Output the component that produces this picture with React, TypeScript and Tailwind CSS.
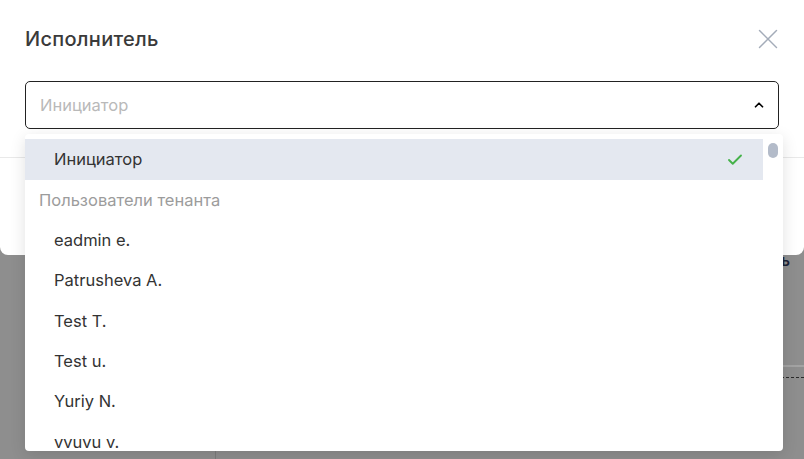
import { ChevronUp, X, Check } from 'lucide-react';

const users = ['eadmin e.', 'Patrusheva A.', 'Test T.', 'Test u.', 'Yuriy N.', 'vvuvu v.', 'Ivanov I.', 'Petrov P.'];

export default function App() {
    return (
        <div className="relative h-[459px] w-[804px] overflow-hidden bg-[#8e8e8e] font-['Inter',sans-serif]">
            {/* page behind the overlay */}
            <div className="absolute inset-0 flex">
                <div className="w-[216px] border-r border-[#7c7c7c]" />
                <div className="flex flex-1 flex-col items-end pt-[250px]">
                    <span className="pr-[14px] text-[15px] font-semibold text-[#1c2236]">Сохранить</span>
                    <div className="mt-[92px] h-[2px] w-full bg-[#a3a3a3]" />
                    <div className="mt-[10px] w-full border-t border-dashed border-[#2a2a2a]" />
                </div>
            </div>

            {/* modal */}
            <div className="absolute left-0 right-0 top-0 h-[255px] rounded-b-lg bg-white">
                <div className="flex h-[81px] items-center justify-between pb-[3px] pl-[25px] pr-[19px]">
                    <h2 className="text-[20px] font-medium leading-none tracking-[0.3px] text-[#3a3a3a]">Исполнитель</h2>
                    <X className="text-[#a4acb9]" size={34} strokeWidth={1} />
                </div>
                <div className="px-[25px]">
                    <div className="flex h-[48px] items-center justify-between rounded-[5px] border border-[#222] pl-[14px] pr-[12px]">
                        <span className="text-[16.5px] text-[#b9b9b9]">Инициатор</span>
                        <ChevronUp className="text-black" size={14} strokeWidth={3} />
                    </div>
                </div>
                <div className="mt-[28px] border-t border-[#e9e9e9]" />
            </div>

            {/* dropdown menu */}
            <div className="absolute left-[25px] top-[134px] flex h-[317px] w-[758px] rounded-[4px] bg-white pt-[5px] shadow-[0_4px_16px_rgba(0,0,0,0.12)]">
                <div className="flex-1 overflow-hidden">
                    <div className="flex h-[41px] items-center justify-between bg-[#e4e8f0] pl-[29px] pr-[19px]">
                        <span className="text-[16.5px] text-[#333]">Инициатор</span>
                        <Check className="text-[#45b24a]" size={18} strokeWidth={2.5} />
                    </div>
                    <div className="flex h-[40px] items-center pl-[14px] text-[16.5px] text-[#9c9c9c]">
                        Пользователи тенанта
                    </div>
                    {users.map((u) => (
                        <div key={u} className="flex h-[40.4px] items-center pl-[29px] text-[16.5px] text-[#333]">
                            {u}
                        </div>
                    ))}
                </div>
                <div className="w-[20px] pl-[5px] pt-[4px]">
                    <div className="h-[15px] w-[10px] rounded-full bg-[#b3bbc9]" />
                </div>
            </div>
        </div>
    );
}
